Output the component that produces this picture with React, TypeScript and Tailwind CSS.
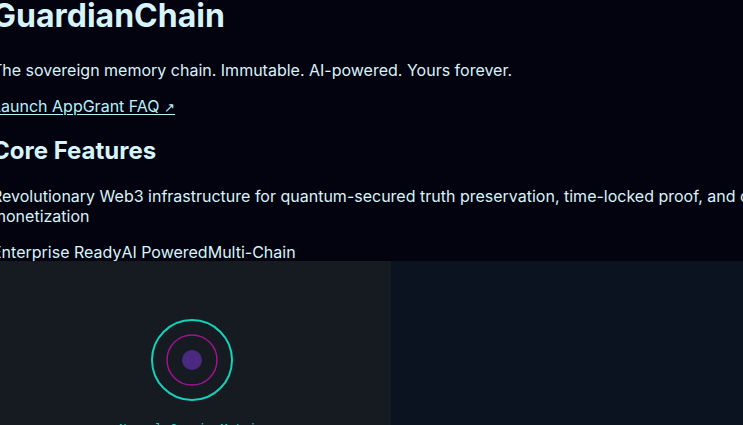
import React from "react";

export default function App() {
  return (
    <div className="w-[743px] h-[425px] overflow-hidden bg-[#03020f] text-[#d6f4fa]" style={{ fontFamily: "Inter, 'Noto Sans', sans-serif" }}>
      <div className="w-[860px] -ml-2 flex flex-col">
        <h1 className="text-[32px] font-bold leading-[36px] -mt-[2px]">GuardianChain</h1>
        <p className="text-base leading-5 mt-[26px]">The sovereign memory chain. Immutable. AI-powered. Yours forever.</p>
        <a href="#" className="block h-5 text-base leading-5 mt-[16px] underline underline-offset-2 text-[#b3f2fb]">
          Launch AppGrant FAQ <span className="text-[13px] leading-none" style={{ fontFamily: "'Liberation Sans', sans-serif" }}>↗</span>
        </a>
        <h2 className="text-2xl font-bold leading-[30px] mt-[20px]">Core Features</h2>
        <p className="text-base leading-5 mt-[20px]">Revolutionary Web3 infrastructure for quantum-secured truth preservation, time-locked proof, and creator monetization</p>
        <div className="text-base leading-5 mt-[16px] flex">
          <span>Enterprise Ready</span>
          <span>AI Powered</span>
          <span>Multi-Chain</span>
        </div>
        <div className="grid grid-cols-[399px_399px] -mt-[1px]">
          <div className="bg-[#161a21] h-[200px] flex flex-col items-center pt-[57px]">
            <svg width="84" height="84" viewBox="0 0 84 84">
              <circle cx="42" cy="42" r="40" fill="none" stroke="#14d1b9" strokeWidth="2" />
              <circle cx="42" cy="42" r="25" fill="none" stroke="#a0138e" strokeWidth="1.5" />
              <circle cx="42" cy="42" r="10" fill="#4a2a80" />
            </svg>
            <div className="mt-[19px] text-xs text-[#14d1b9]" style={{ fontFamily: "'DejaVu Sans Mono', monospace" }}>
              Neural Cosmic Matrix
            </div>
          </div>
          <div className="bg-[#0b1320] h-[200px]" />
        </div>
      </div>
    </div>
  );
}
